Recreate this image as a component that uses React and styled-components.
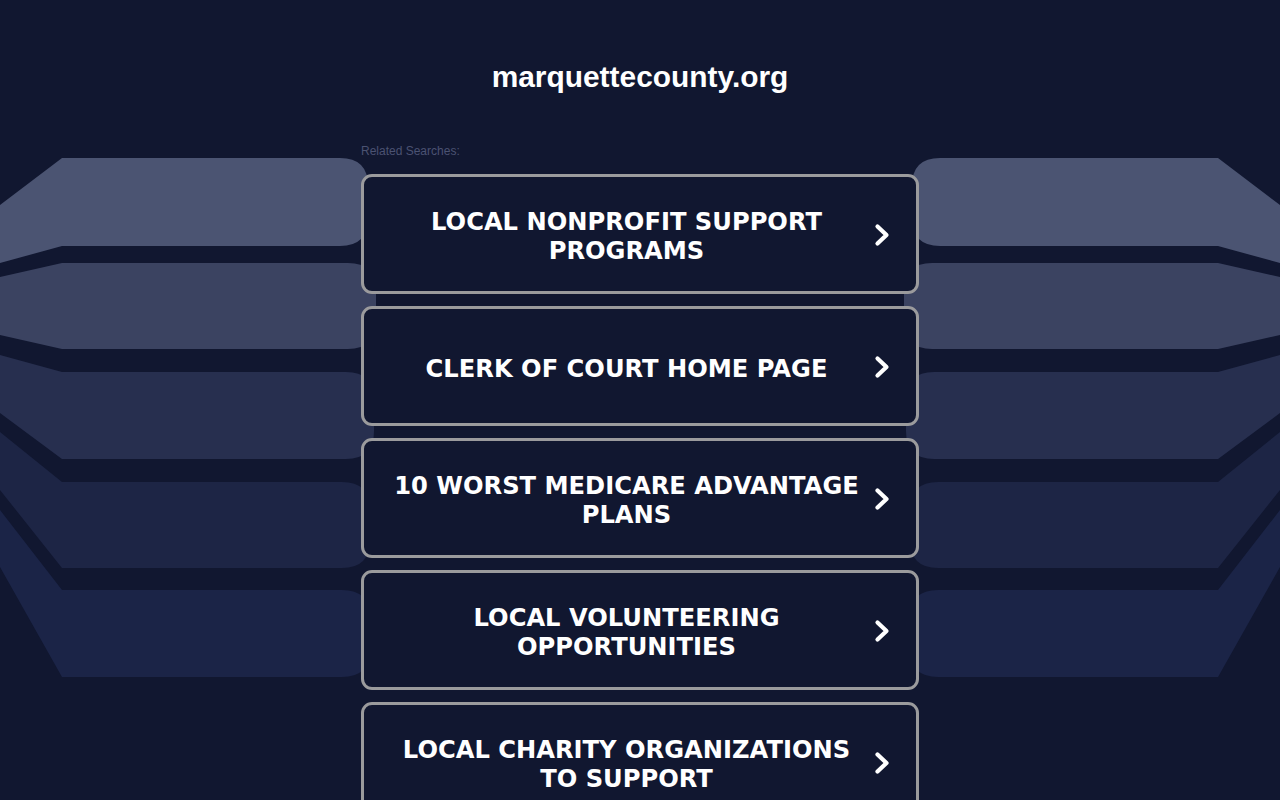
import React from "react";
import styled, { createGlobalStyle } from "styled-components";

const GlobalStyle = createGlobalStyle`
  html, body {
    margin: 0;
    padding: 0;
    background: #111730;
  }
  body {
    font-family: "Liberation Sans", Arial, sans-serif;
  }
  * { box-sizing: border-box; }
`;

const Page = styled.div`
  position: relative;
  min-height: 800px;
  width: 100%;
  overflow: hidden;
  background: #111730;
`;

const Backdrop = styled.svg`
  position: absolute;
  left: 0;
  top: 0;
  width: 1280px;
  height: 800px;
  pointer-events: none;
`;

const Content = styled.main`
  position: relative;
  display: flex;
  flex-direction: column;
  align-items: center;
  padding-top: 60px;
`;

const Title = styled.h1`
  margin: 0;
  font-family: "Liberation Sans", Arial, sans-serif;
  font-weight: 700;
  font-size: 29.9px;
  line-height: 34px;
  color: #ffffff;
  text-align: center;
`;

const Column = styled.section`
  width: 558px;
  margin-top: 50px;
  display: flex;
  flex-direction: column;
`;

const Related = styled.div`
  font-family: "Liberation Sans", Arial, sans-serif;
  font-size: 12px;
  line-height: 14px;
  color: #4b5272;
  margin-bottom: 16px;
`;

const List = styled.div`
  display: flex;
  flex-direction: column;
  gap: 12px;
`;

const Card = styled.a`
  display: flex;
  align-items: center;
  height: 120px;
  padding: 0 26px 0 23px;
  border: 3px solid #9b9b9d;
  border-radius: 11px;
  background: #111730;
  text-decoration: none;
  cursor: pointer;
`;

const Label = styled.span`
  flex: 1;
  margin-right: 8px;
  padding-top: 6px;
  font-family: "DejaVu Sans", Verdana, sans-serif;
  font-weight: 700;
  font-size: 24.2px;
  line-height: 29px;
  color: #ffffff;
  text-align: center;
  text-transform: uppercase;
`;

const Chevron = styled.svg`
  flex: none;
  width: 16px;
  height: 24px;
  margin-top: 2px;
`;

const bands = [
  { tl: 205, tk: 158, bk: 246, bl: 263, xr: 368, c: "#4b5472" },
  { tl: 277, tk: 263, bk: 349, bl: 335, xr: 376, c: "#3b4361" },
  { tl: 355, tk: 372, bk: 459, bl: 413, xr: 374, c: "#272f4f" },
  { tl: 432, tk: 482, bk: 568, bl: 490, xr: 370, c: "#1d2545" },
  { tl: 510, tk: 590, bk: 677, bl: 567, xr: 370, c: "#1b2447" },
];

function bandPath(b) {
  const r = 28;
  return `M0,${b.tl} L62,${b.tk} L${b.xr - r},${b.tk} Q${b.xr},${b.tk} ${b.xr},${b.tk + r} L${b.xr},${b.bk - r} Q${b.xr},${b.bk} ${b.xr - r},${b.bk} L62,${b.bk} L0,${b.bl} Z`;
}

const items = [
  "Local Nonprofit Support Programs",
  "Clerk of Court Home Page",
  "10 Worst Medicare Advantage Plans",
  "Local Volunteering Opportunities",
  "Local Charity Organizations to Support",
];

export default function App() {
  return (
    <>
      <GlobalStyle />
      <Page>
        <Backdrop viewBox="0 0 1280 800" aria-hidden="true">
          {bands.map((b, i) => (
            <g key={i} fill={b.c}>
              <path d={bandPath(b)} />
              <path d={bandPath(b)} transform="translate(1280,0) scale(-1,1)" />
            </g>
          ))}
        </Backdrop>
        <Content>
          <Title>marquettecounty.org</Title>
          <Column>
            <Related>Related Searches:</Related>
            <List>
              {items.map((t) => (
                <Card key={t}>
                  <Label>{t}</Label>
                  <Chevron viewBox="0 0 16 24">
                    <polyline
                      points="3.5,3.5 12.5,12 3.5,20.5"
                      fill="none"
                      stroke="#ffffff"
                      strokeWidth="4.2"
                      strokeLinecap="round"
                      strokeLinejoin="round"
                    />
                  </Chevron>
                </Card>
              ))}
            </List>
          </Column>
        </Content>
      </Page>
    </>
  );
}
